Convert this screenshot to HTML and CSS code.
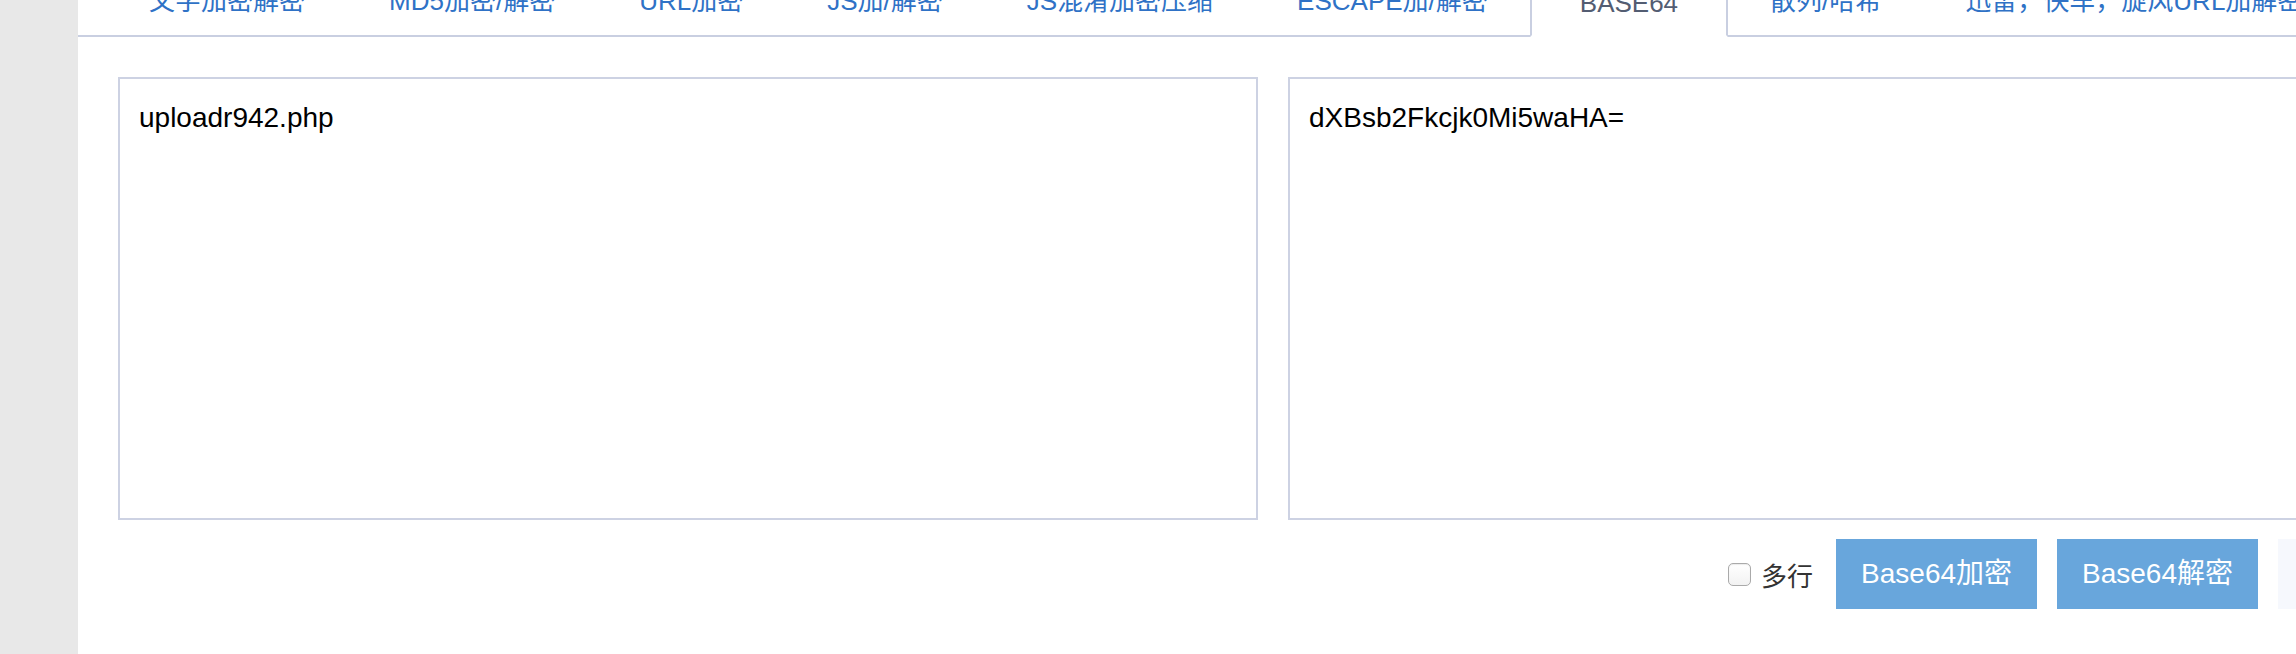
FILE: index.html
```html
<!DOCTYPE html>
<html lang="zh-CN">
<head>
<meta charset="utf-8">
<title>BASE64</title>
<link rel="stylesheet" href="styles.css">
</head>
<body>
<div class="page">
  <aside class="sidebar"></aside>
  <main class="main">
    <ul class="tabs">
      <li class="tab"><a href="#">文字加密解密</a></li>
      <li class="tab"><a href="#">MD5加密/解密</a></li>
      <li class="tab"><a href="#">URL加密</a></li>
      <li class="tab"><a href="#">JS加/解密</a></li>
      <li class="tab"><a href="#">JS混淆加密压缩</a></li>
      <li class="tab"><a href="#">ESCAPE加/解密</a></li>
      <li class="tab active"><a href="#">BASE64</a></li>
      <li class="tab"><a href="#">散列/哈希</a></li>
      <li class="tab"><a href="#">迅雷，快车，旋风URL加解密</a></li>
    </ul>
    <section class="content">
      <div class="editors">
        <textarea class="box">uploadr942.php</textarea>
        <textarea class="box">dXBsb2Fkcjk0Mi5waHA=</textarea>
      </div>
      <div class="actions">
        <label class="multi"><input type="checkbox" class="check"><span>多行</span></label>
        <button class="btn primary">Base64加密</button>
        <button class="btn primary">Base64解密</button>
        <button class="btn light">清空</button>
      </div>
    </section>
  </main>
</div>
</body>
</html>
```
FILE: styles.css
```css
html, body {
  margin: 0;
  padding: 0;
  background: #fff;
  overflow: hidden;
}
body {
  font-family: "Liberation Sans", "Noto Sans CJK SC", sans-serif;
  height: 654px;
}
.page {
  display: flex;
  height: 654px;
  width: 2586px;
}
.sidebar {
  width: 78px;
  flex: 0 0 78px;
  background: #e8e8e8;
}
.main {
  flex: 0 0 2508px;
  background: #fff;
}
.tabs {
  list-style: none;
  margin: -19px 0 0 0;
  padding: 0 0 0 29px;
  display: flex;
  border-bottom: 2px solid #c9cfe1;
}
.tab {
  margin-bottom: -2px;
}
.tab a {
  display: block;
  padding: 0 42px 12px;
  line-height: 40px;
  height: 40px;
  font-size: 26px;
  color: #2f72c6;
  text-decoration: none;
  white-space: nowrap;
  border-bottom: 2px solid transparent;
}
.tab.active a {
  color: #535d72;
  padding: 0 48px 12px;
  border: 2px solid #c9cfe1;
  border-bottom: 2px solid #fff;
  border-radius: 4px 4px 0 0;
}
.content {
  display: grid;
  width: max-content;
  padding: 40px 40px 0;
}
.editors {
  display: grid;
  grid-template-columns: 1140px 1140px;
  gap: 30px;
}
.box {
  display: block;
  box-sizing: border-box;
  width: 1140px;
  height: 443px;
  margin: 0;
  padding: 18px 19px;
  border: 2px solid #cdd2e3;
  border-radius: 0;
  font-family: "Liberation Sans", "Noto Sans CJK SC", sans-serif;
  font-size: 28px;
  line-height: 42px;
  color: #000;
  resize: none;
  outline: none;
  background: #fff;
}
.actions {
  margin-top: 19px;
  display: flex;
  justify-content: flex-end;
  align-items: center;
  gap: 20px;
}
.multi {
  display: flex;
  align-items: center;
  font-size: 26px;
  color: #333;
  margin-right: 3px;
}
.check {
  appearance: none;
  -webkit-appearance: none;
  width: 23px;
  height: 23px;
  margin: 0 10px 0 0;
  border: 1.5px solid #aaaaaa;
  border-radius: 5px;
  background: linear-gradient(#fff, #f2f2f2);
  box-shadow: inset 0 1px 1px rgba(0,0,0,0.08);
}
.btn {
  height: 70px;
  min-width: 150px;
  padding: 0 25px;
  border: none;
  border-radius: 0;
  font-family: "Liberation Sans", "Noto Sans CJK SC", sans-serif;
  font-size: 28px;
  line-height: 70px;
  cursor: pointer;
}
.btn.primary {
  background: #68a6dc;
  color: #fff;
}
.btn.light {
  background: #f6f8fd;
  color: #68a6dc;
}
```
